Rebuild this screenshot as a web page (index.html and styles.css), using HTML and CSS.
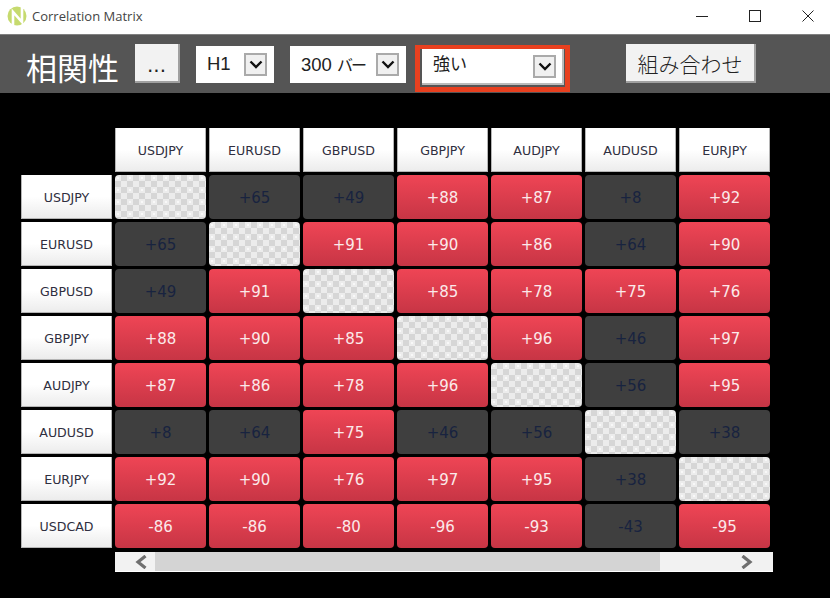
FILE: index.html
```html
<!DOCTYPE html>
<html lang="ja">
<head>
<meta charset="utf-8">
<title>Correlation Matrix</title>
<link rel="stylesheet" href="styles.css">
</head>
<body>
<div class="window">
  <header class="titlebar">
    <svg class="logo" viewBox="0 0 20 20" width="20" height="20"><circle cx="10" cy="10" r="9.500" fill="#c6da6e"/><path d="M6 20V6L15 16V0" fill="none" stroke="#fff" stroke-width="2.600"/></svg>
    <span class="title">Correlation Matrix</span>
    <div class="controls">
      <svg width="12" height="12" viewBox="0 0 12 12"><path d="M0 6.500H12" stroke="#222" fill="none"/></svg>
      <svg width="12" height="12" viewBox="0 0 12 12"><rect x=".5" y=".5" width="11" height="11" stroke="#222" fill="none"/></svg>
      <svg width="12" height="12" viewBox="0 0 12 12"><path d="M.5 .5L11.500 11.500M11.500 .5L.5 11.500" stroke="#222" fill="none"/></svg>
    </div>
  </header>
  <div class="toolbar">
    <span class="heading">相関性</span>
    <button class="btn btn-more">...</button>
    <div class="select sel-tf"><span>H1</span><i class="arrow"><svg width="14" height="9" viewBox="0 0 14 9"><path d="M1.500 1.500L7 7L12.500 1.500" fill="none" stroke="#111" stroke-width="2.400"/></svg></i></div>
    <div class="select sel-bars"><span>300 <span class="kana">バー</span></span><i class="arrow"><svg width="14" height="9" viewBox="0 0 14 9"><path d="M1.500 1.500L7 7L12.500 1.500" fill="none" stroke="#111" stroke-width="2.400"/></svg></i></div>
    <div class="hilite"><div class="select sel-str"><span>強い</span><i class="arrow"><svg width="14" height="9" viewBox="0 0 14 9"><path d="M1.500 1.500L7 7L12.500 1.500" fill="none" stroke="#111" stroke-width="2.400"/></svg></i></div></div>
    <button class="btn btn-combo">組み合わせ</button>
  </div>
  <main class="matrix">
    <div class="grid">
      <div class="corner"></div>
      <div class="hd">USDJPY</div><div class="hd">EURUSD</div><div class="hd">GBPUSD</div><div class="hd">GBPJPY</div><div class="hd">AUDJPY</div><div class="hd">AUDUSD</div><div class="hd">EURJPY</div>

      <div class="hd">USDJPY</div><div class="c x"></div><div class="c n">+65</div><div class="c n">+49</div><div class="c r">+88</div><div class="c r">+87</div><div class="c n">+8</div><div class="c r">+92</div>
      <div class="hd">EURUSD</div><div class="c n">+65</div><div class="c x"></div><div class="c r">+91</div><div class="c r">+90</div><div class="c r">+86</div><div class="c n">+64</div><div class="c r">+90</div>
      <div class="hd">GBPUSD</div><div class="c n">+49</div><div class="c r">+91</div><div class="c x"></div><div class="c r">+85</div><div class="c r">+78</div><div class="c r">+75</div><div class="c r">+76</div>
      <div class="hd">GBPJPY</div><div class="c r">+88</div><div class="c r">+90</div><div class="c r">+85</div><div class="c x"></div><div class="c r">+96</div><div class="c n">+46</div><div class="c r">+97</div>
      <div class="hd">AUDJPY</div><div class="c r">+87</div><div class="c r">+86</div><div class="c r">+78</div><div class="c r">+96</div><div class="c x"></div><div class="c n">+56</div><div class="c r">+95</div>
      <div class="hd">AUDUSD</div><div class="c n">+8</div><div class="c n">+64</div><div class="c r">+75</div><div class="c n">+46</div><div class="c n">+56</div><div class="c x"></div><div class="c n">+38</div>
      <div class="hd">EURJPY</div><div class="c r">+92</div><div class="c r">+90</div><div class="c r">+76</div><div class="c r">+97</div><div class="c r">+95</div><div class="c n">+38</div><div class="c x"></div>
      <div class="hd">USDCAD</div><div class="c r">-86</div><div class="c r">-86</div><div class="c r">-80</div><div class="c r">-96</div><div class="c r">-93</div><div class="c n">-43</div><div class="c r">-95</div>
    </div>
    <div class="scrollbar">
      <div class="sb-btn"><svg width="14" height="14" viewBox="0 0 14 14"><path d="M11.500 1L4 7L11.500 13" fill="none" stroke="#6f6f6f" stroke-width="3.200"/></svg></div>
      <div class="sb-thumb"></div>
      <div class="sb-btn sb-end"><svg width="14" height="14" viewBox="0 0 14 14"><path d="M2.500 1L10 7L2.500 13" fill="none" stroke="#6f6f6f" stroke-width="3.200"/></svg></div>
    </div>
  </main>
</div>
</body>
</html>
```
FILE: styles.css
```css
* { box-sizing: border-box; }
html, body { margin: 0; padding: 0; background: #000; }
.window { width: 830px; height: 598px; background: #000; overflow: hidden; font-family: "DejaVu Sans", sans-serif; }
.titlebar { height: 35px; background: #fff; border-bottom: 1px solid #808080; display: flex; align-items: center; padding-left: 7px; }
.logo { display: block; margin-right: 5px; margin-top: -3px; }
.title { font: 13px "Open Sans", "Noto Sans", sans-serif; color: #444; margin-top: -3px; }
.controls { margin-left: auto; display: flex; gap: 41px; padding-right: 16px; margin-top: -3px; }
.controls svg { display: block; }
.toolbar { height: 58px; background: #555; display: flex; align-items: center; padding-left: 26px; }
.heading { font: 31px "Noto Sans CJK JP", sans-serif; color: #fff; line-height: 40px; margin-right: 17px; width: 92px; white-space: nowrap; margin-top: 5px; }
.btn { height: 39px; background: #f2f2f2; border: 0; border-right: 2px solid #a0a0a0; border-bottom: 2px solid #a0a0a0; padding: 0; color: #222; margin-top: -1px; }
.btn-more { width: 45px; font: 20px "DejaVu Sans", sans-serif; margin-right: 16px; padding-top: 5px; }
.btn-combo { width: 130px; font: 300 21px "Noto Sans CJK JP", sans-serif; margin-left: 56px; }
.select { height: 37px; background: #fff; display: flex; align-items: center; justify-content: space-between; padding: 0 7px 0 11px; font: 18.500px "Liberation Sans", "Noto Sans CJK JP", sans-serif; color: #222; }
.kana { font-size: 16px; letter-spacing: -2px; }
.sel-tf { width: 78px; margin-right: 16px; }
.sel-bars { width: 116px; margin-right: 9px; }
.hilite { width: 155px; height: 47px; border: 4px solid #e8401f; border-width: 4px 5px 5px; padding: 0 1px 0 2px; display: flex; align-items: flex-start; margin-top: 9px; }
.sel-str { width: 142px; height: 36px; border-bottom: 2px solid #bbb; border-right: 2px solid #bbb; padding-right: 6px; }
.sel-str > span { font-size: 17px; margin-top: -7px; }
.arrow { width: 23px; height: 23px; background: #f0f0f0; border: 2px solid #aaa; display: flex; align-items: center; justify-content: center; }
.matrix { padding: 35px 0 0 21px; }
.grid { display: grid; grid-template-columns: repeat(8, 91px); grid-auto-rows: 44px; gap: 3px; }
.hd { background: linear-gradient(#fff 50%, #ececec); border: 1px solid #b5b5b5; border-top: 0; display: flex; align-items: center; justify-content: center; font-size: 12.600px; color: #2f2f40; padding-top: 2px; }
.c { border-radius: 4px; display: flex; align-items: center; justify-content: center; font-size: 15px; padding-top: 2px; }
.r { background: linear-gradient(#ef4555, #c73545); color: #fbe9ea; }
.n { background: #3f3f3f; color: #18233f; }
.x { background-color: #ececec; background-image: radial-gradient(circle at 3px 3px, #f8f8f8 1px, transparent 1.500px), conic-gradient(#d6d6d6 25%, transparent 0 50%, #d6d6d6 0 75%, transparent 0); background-size: 12px 12px, 12px 12px; }
.scrollbar { width: 658px; height: 20px; margin: 4px 0 0 94px; background: #f2f2f2; border-bottom: 1px solid #fff; display: flex; align-items: center; }
.sb-btn { width: 40px; height: 19px; display: flex; align-items: center; padding-left: 19px; }
.sb-thumb { width: 505px; height: 19px; background: #d4d4d4; }
.sb-end { margin-left: auto; width: 113px; justify-content: flex-end; padding: 0 19px 0 0; }
```
